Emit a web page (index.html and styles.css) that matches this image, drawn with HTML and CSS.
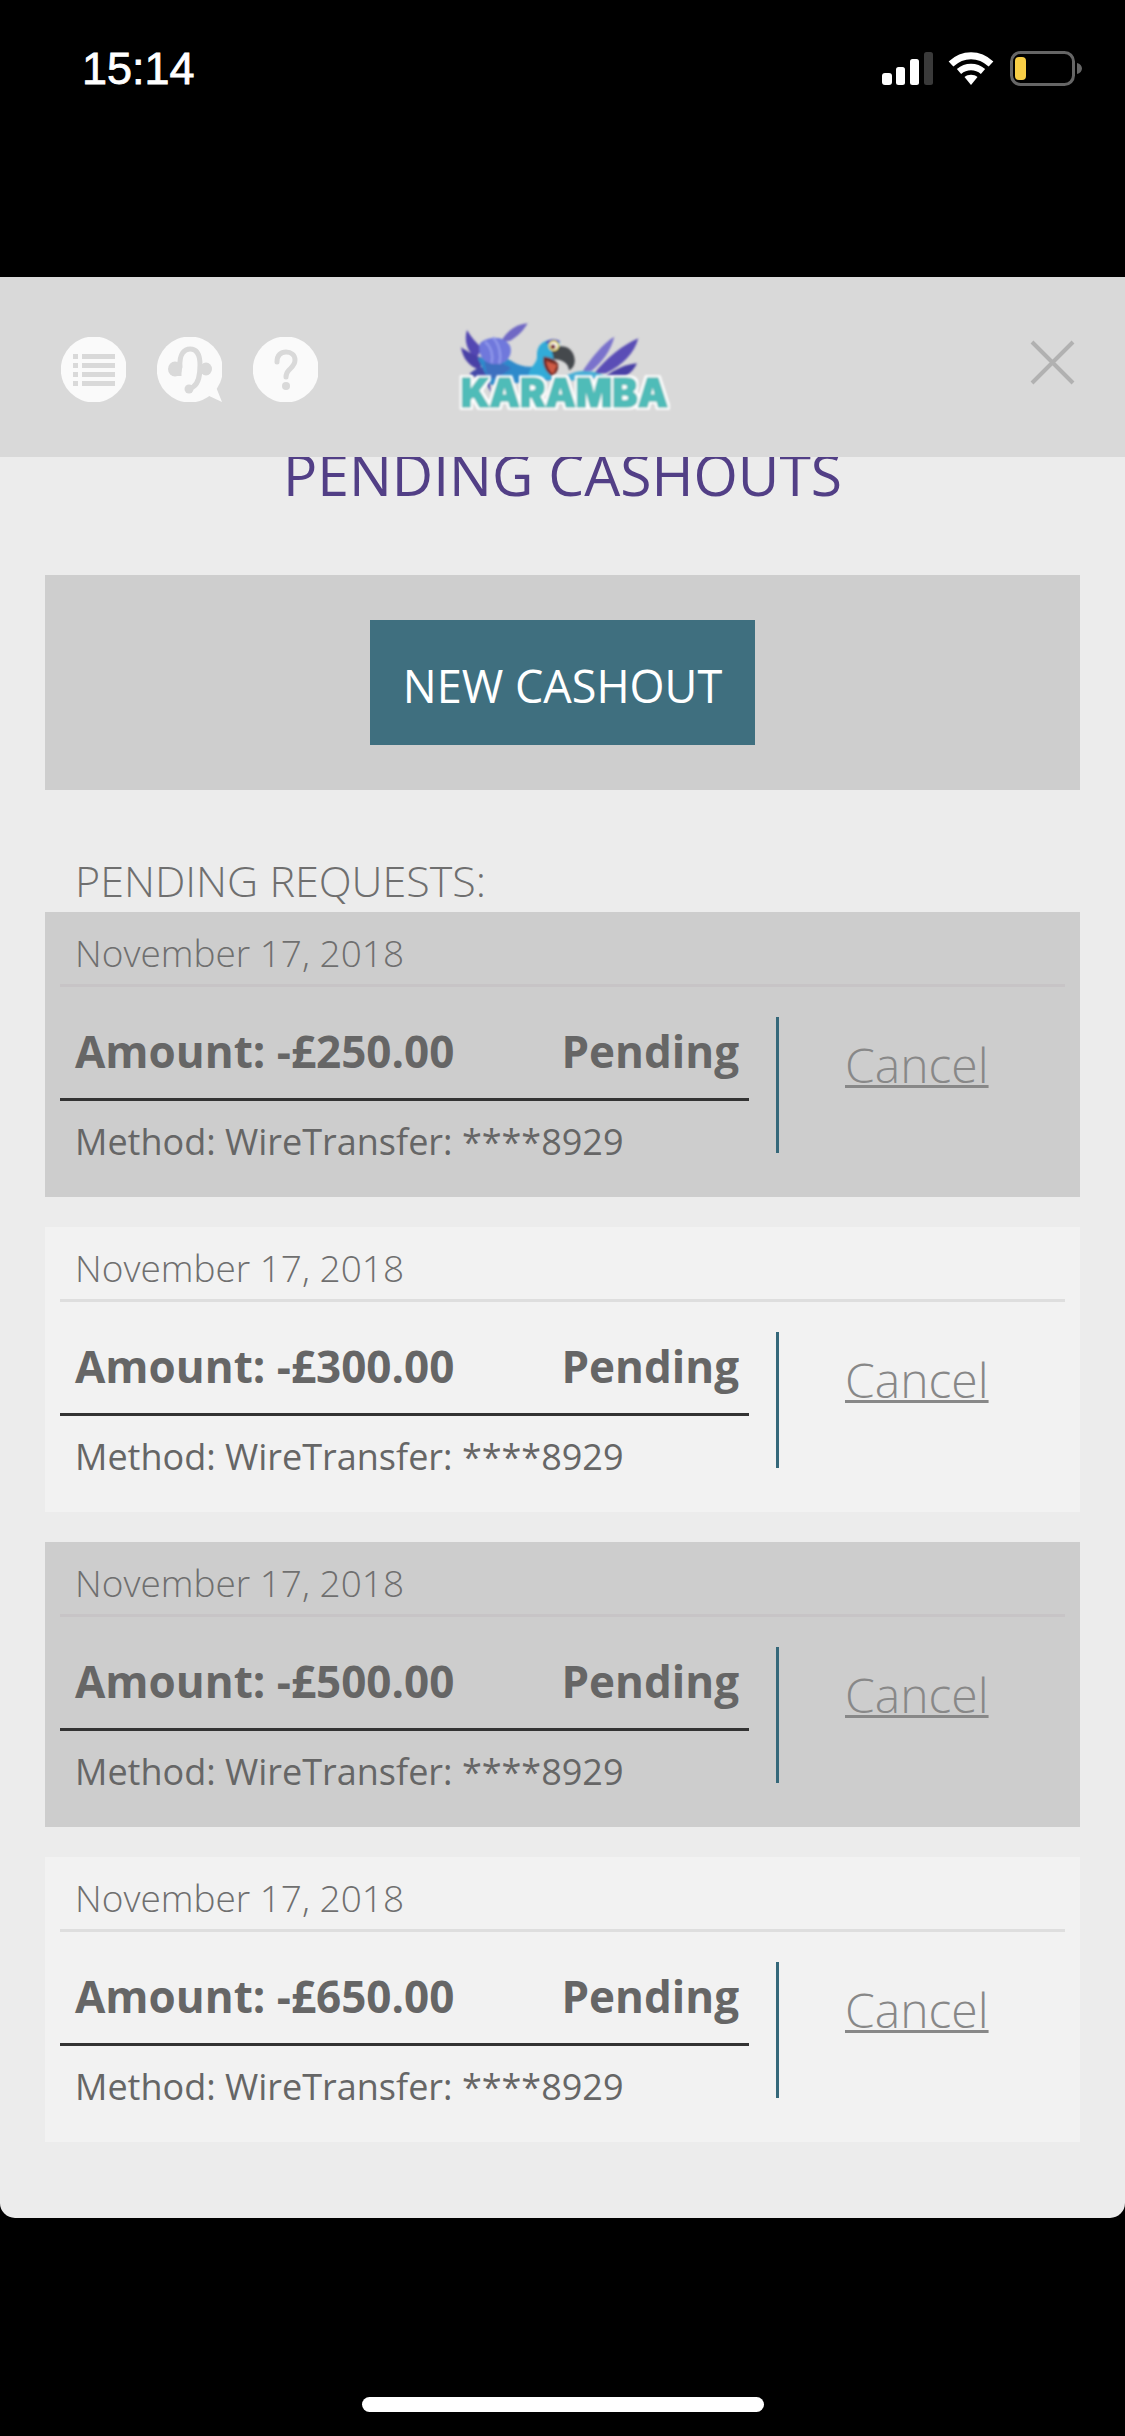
FILE: index.html
```html
<!DOCTYPE html>
<html lang="en">
<head>
<meta charset="utf-8">
<title>Pending Cashouts</title>
<link rel="stylesheet" href="styles.css">
</head>
<body>
<div class="screen">
  <div class="status">
    <span class="time">15:14</span>
    <div class="status-icons">
      <svg class="signal" width="51" height="33" viewBox="0 0 51 33"><rect x="0" y="21" width="10" height="12" rx="3" fill="#fff"/><rect x="14" y="15" width="9" height="18" rx="2.5" fill="#fff"/><rect x="28" y="7" width="9" height="26" rx="2.5" fill="#fff"/><rect x="42" y="0" width="9" height="33" rx="2.5" fill="#3a3a3a"/></svg>
      <svg class="wifi" width="46" height="33" viewBox="0 0 46 33"><path d="M3 12C15 1 31 1 43 12" fill="none" stroke="#fff" stroke-width="7"/><path d="M11 19.500C18 13.500 28 13.500 35 19.500" fill="none" stroke="#fff" stroke-width="6.500"/><path d="M16.500 25C20 22 26 22 29.500 25L23 33Z" fill="#fff"/></svg>
      <svg class="battery" width="72" height="35" viewBox="0 0 72 35"><rect x="1.500" y="1.500" width="62" height="32" rx="9" fill="none" stroke="#666" stroke-width="3"/><rect x="5" y="6" width="11" height="23" rx="4" fill="#f8ce46"/><path d="M67 12C70 12.500 72 15 72 17.500C72 20 70 22.500 67 23Z" fill="#666"/></svg>
    </div>
  </div>

  <div class="modal">
    <header class="modal-header">
      <div class="header-icons">
        <svg class="round-icon" width="65" height="65" viewBox="0 0 65 65"><circle cx="32.800" cy="32.500" r="33" fill="#fafafa"/><g fill="#d9d9d9"><rect x="12" y="17" width="5" height="5"/><rect x="21" y="17" width="33" height="5"/><rect x="12" y="26" width="5" height="5"/><rect x="21" y="26" width="33" height="5"/><rect x="12" y="35" width="5" height="5"/><rect x="21" y="35" width="33" height="5"/><rect x="12" y="44" width="5" height="5"/><rect x="21" y="44" width="33" height="5"/></g></svg>
        <svg class="round-icon" width="65" height="65" viewBox="0 0 65 65"><circle cx="32.800" cy="32.500" r="33" fill="#fafafa"/><path d="M50 58L65 65L59 50Z" fill="#fafafa"/><path d="M23 30C22 16 28 12 33 12C40 12 43 18 43 28C43 38 42 46 36 50L32 51.500" fill="none" stroke="#d9d9d9" stroke-width="5" stroke-linecap="round"/><g fill="#d9d9d9"><ellipse cx="18" cy="32" rx="7" ry="7.500"/><rect x="18" y="27" width="6.500" height="12"/><ellipse cx="49" cy="32" rx="6" ry="6.500"/><circle cx="32" cy="52" r="4.500"/></g></svg>
        <svg class="round-icon" width="65" height="65" viewBox="0 0 65 65"><circle cx="32.800" cy="32.500" r="33" fill="#fafafa"/><path d="M24 25C24 18 28 15 33 15C38 15 42 18 42 23C42 28 39 30 36 33C34 35 33 36 33 40" fill="none" stroke="#d9d9d9" stroke-width="5" stroke-linecap="round"/><circle cx="33" cy="49" r="4" fill="#d9d9d9"/></svg>
      </div>
      <svg class="logo" width="260" height="130" viewBox="0 0 780 390" role="img" aria-label="Karamba">
        <defs>
          <filter id="soft"><feGaussianBlur stdDeviation="2.400"/></filter>
          <filter id="outline" x="-5%" y="-20%" width="110%" height="140%">
            <feMorphology in="SourceAlpha" operator="dilate" radius="6" result="grown"/>
            <feFlood flood-color="#ffffff"/>
            <feComposite in2="grown" operator="in" result="white"/>
            <feMerge result="merged"><feMergeNode in="white"/><feMergeNode in="SourceGraphic"/></feMerge>
            <feGaussianBlur in="merged" stdDeviation="2.400"/>
          </filter>
        </defs>
        <g filter="url(#soft)">
          <path d="M290 70C255 72 225 95 210 125L238 122C262 108 280 88 290 70Z" fill="#6f68c4"/>
          <path d="M108 90C98 120 108 155 135 175L155 145C135 130 120 110 108 90Z" fill="#5346b2"/>
          <path d="M90 142C96 178 115 198 145 210L160 175C135 170 110 155 90 142Z" fill="#4a3fa6"/>
          <path d="M115 222C130 208 150 198 170 200L175 240L180 278L165 250Z" fill="#4548a8"/>
          <path d="M140 175C170 170 215 165 245 185C270 200 300 205 325 195L370 240L180 255Z" fill="#2f8acb"/>
          <path d="M160 185C190 180 220 190 240 205L200 235L170 235Z" fill="#3d6fc0"/>
          <path d="M148 128C178 105 225 108 238 140C246 170 222 195 190 192C160 192 135 160 148 128Z" fill="#6f78dc"/>
          <path d="M185 112C205 130 212 165 205 192M162 125C180 140 188 165 182 190" fill="none" stroke="#8f97ea" stroke-width="7"/>
          <path d="M318 170C315 130 345 116 375 120C395 122 382 145 375 170C360 190 350 225 368 238L295 238C285 205 318 195 318 170Z" fill="#31abd8"/>
          <path d="M342 128C352 116 372 114 388 124L372 136Z" fill="#4a50bd"/>
          <path d="M362 150C385 128 428 138 431 178C433 192 425 208 414 211C412 190 395 178 368 178Z" fill="#45484e"/>
          <path d="M338 170C352 170 372 178 380 190C386 206 376 224 362 228C345 216 333 195 338 170Z" fill="#6f2a28"/>
          <path d="M346 182C356 188 372 192 378 194L366 222C354 212 347 197 346 182Z" fill="#cf5a44"/>
          <circle cx="368" cy="137" r="16" fill="#e6d24c"/><circle cx="368" cy="138" r="11" fill="#fff"/><circle cx="366" cy="140" r="7.500" fill="#7b2b30"/>
          <path d="M550 110C515 130 480 175 452 218L482 212C515 185 540 150 550 110Z" fill="#7a72cc"/>
          <path d="M622 115C575 135 525 175 488 222L525 220C575 195 610 160 622 115Z" fill="#5a4eb6"/>
          <path d="M618 190C590 192 555 205 522 230L585 228C600 218 612 205 618 190Z" fill="#4a3fa6"/>
          <path d="M408 226C435 212 460 210 490 216L530 232L420 242Z" fill="#47aed6"/>
        </g>
        <text class="logo-text" x="400" y="320" text-anchor="middle" textLength="622" lengthAdjust="spacingAndGlyphs" filter="url(#outline)">KARAMBA</text>
      </svg>
      <svg class="close" width="45" height="45" viewBox="0 0 45 45"><path d="M2 2L43 43M43 2L2 43" stroke="#b1b1b1" stroke-width="4" fill="none"/></svg>
    </header>

    <main class="modal-body">
      <h1 class="title">PENDING CASHOUTS</h1>
      <section class="new-box"><a class="new-btn">NEW CASHOUT</a></section>
      <h2 class="requests">PENDING REQUESTS:</h2>
      <div class="cards">
        <article class="card card-dark">
          <div class="date">November 17, 2018</div>
          <div class="card-body">
            <div class="info">
              <div class="amount-row"><span>Amount: -£250.00</span><span>Pending</span></div>
              <div class="method">Method: WireTransfer: ****8929</div>
            </div>
            <div class="action"><a class="cancel">Cancel</a></div>
          </div>
        </article>
        <article class="card card-light">
          <div class="date">November 17, 2018</div>
          <div class="card-body">
            <div class="info">
              <div class="amount-row"><span>Amount: -£300.00</span><span>Pending</span></div>
              <div class="method">Method: WireTransfer: ****8929</div>
            </div>
            <div class="action"><a class="cancel">Cancel</a></div>
          </div>
        </article>
        <article class="card card-dark">
          <div class="date">November 17, 2018</div>
          <div class="card-body">
            <div class="info">
              <div class="amount-row"><span>Amount: -£500.00</span><span>Pending</span></div>
              <div class="method">Method: WireTransfer: ****8929</div>
            </div>
            <div class="action"><a class="cancel">Cancel</a></div>
          </div>
        </article>
        <article class="card card-light">
          <div class="date">November 17, 2018</div>
          <div class="card-body">
            <div class="info">
              <div class="amount-row"><span>Amount: -£650.00</span><span>Pending</span></div>
              <div class="method">Method: WireTransfer: ****8929</div>
            </div>
            <div class="action"><a class="cancel">Cancel</a></div>
          </div>
        </article>
      </div>
    </main>
  </div>

  <div class="home-row"><div class="home-bar"></div></div>
</div>
</body>
</html>
```

FILE: styles.css
```css
* { box-sizing: border-box; }
html, body { margin: 0; padding: 0; background: #000; }
.screen {
  width: 1125px;
  height: 2436px;
  background: #000;
  display: flex;
  flex-direction: column;
  overflow: hidden;
  font-family: "Open Sans", sans-serif;
}
.status {
  height: 277px;
  flex: none;
  display: flex;
  justify-content: space-between;
  align-items: flex-start;
  padding: 43px 43px 0 82px;
}
.time {
  font-family: "Liberation Sans", sans-serif;
  font-size: 45px;
  line-height: 52px;
  color: #fff;
  -webkit-text-stroke: 0.8px #fff;
}
.status-icons { display: flex; align-items: flex-start; padding-top: 9px; }
.signal { margin-right: 15px; }
.wifi { margin-right: 16px; }
.battery { margin-top: -1px; }

.modal {
  height: 1941px;
  flex: none;
  background: #ececec;
  border-radius: 0 0 15px 15px;
  overflow: hidden;
  display: flex;
  flex-direction: column;
}
.modal-header {
  height: 180px;
  flex: none;
  background: #d9d9d9;
  display: flex;
  align-items: flex-start;
  position: relative;
  z-index: 1;
  padding: 60px 50px 0 61px;
}
.header-icons { display: flex; gap: 31px; }
.round-icon { display: block; }
.logo { margin: -37px 0 0 113px; flex: none; }
.close { margin: 3px 0 0 auto; flex: none; }
.logo-text {
  font-family: "Inter", sans-serif;
  font-weight: 900;
  font-size: 120px;
  fill: #4fbcb8;
  stroke: #4fbcb8;
  stroke-width: 5px;
  stroke-linejoin: round;
}

.modal-body {
  flex: 1;
  padding: 0 45px;
  overflow: hidden;
}
.title {
  margin: -18px 0 0;
  text-align: center;
  font-weight: 400;
  font-size: 57px;
  line-height: 70px;
  color: #523f86;
}
.new-box {
  margin-top: 66px;
  height: 215px;
  background: #cecece;
  display: flex;
  justify-content: center;
  padding-top: 45px;
}
.new-btn {
  width: 385px;
  height: 125px;
  background: #3f6f7f;
  color: #fff;
  font-size: 45px;
  line-height: 131px;
  text-align: center;
}
.requests {
  margin: 0;
  padding: 59px 0 0 30px;
  height: 122px;
  font-weight: 300;
  font-size: 43px;
  line-height: 63px;
  color: #6f6f6f;
}
.cards { display: flex; flex-direction: column; gap: 30px; }
.card { height: 285px; padding: 0 15px; }
.card-dark { background: #cdcdcd; }
.card-light { background: #f2f2f2; }
.date {
  height: 75px;
  padding: 16px 0 0 15px;
  font-weight: 300;
  font-size: 37px;
  line-height: 50px;
  color: #6f6f6f;
  border-bottom: 3px solid #c7c4c6;
}
.card-light .date { border-bottom-color: #dedede; }
.card-body { display: flex; align-items: flex-start; }
.info { width: 689px; flex: none; }
.amount-row {
  height: 114px;
  padding: 34px 10px 0 15px;
  display: flex;
  justify-content: space-between;
  font-weight: 700;
  font-size: 44px;
  line-height: 60px;
  color: #666;
  border-bottom: 3px solid #333;
}
.method {
  padding: 16px 0 0 15px;
  font-weight: 400;
  font-size: 36px;
  line-height: 50px;
  color: #666;
}
.action {
  margin: 30px 0 0 27px;
  height: 136px;
  flex: 1;
  border-left: 3px solid #35687a;
  padding: 15px 0 0 66px;
}
.cancel {
  font-weight: 300;
  font-size: 48px;
  line-height: 65px;
  color: #888;
  text-decoration: underline;
  text-decoration-thickness: 3px;
}
.home-row {
  flex: 1;
  display: flex;
  justify-content: center;
  padding-top: 179px;
}
.home-bar { width: 402px; height: 15px; border-radius: 8px; background: #fff; }
```
